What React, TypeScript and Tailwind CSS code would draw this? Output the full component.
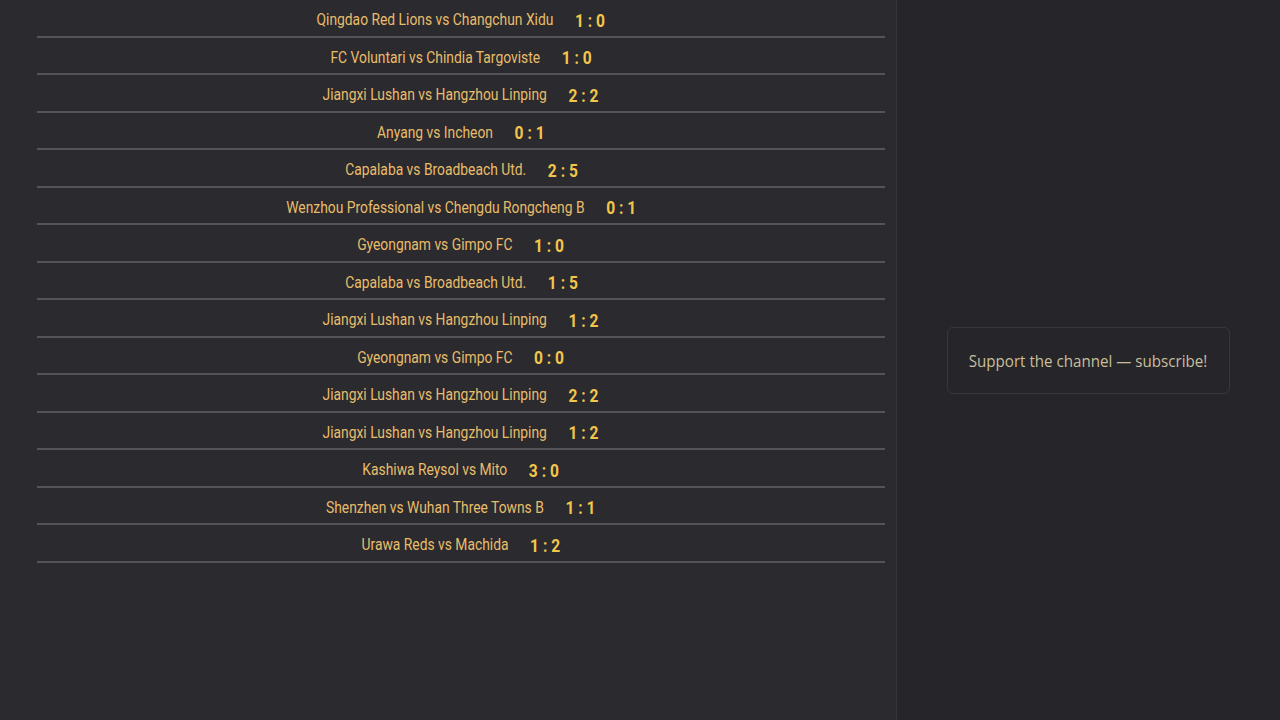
import React from "react";

const matches: [string, string][] = [
  ["Qingdao Red Lions vs Changchun Xidu", "1 : 0"],
  ["FC Voluntari vs Chindia Targoviste", "1 : 0"],
  ["Jiangxi Lushan vs Hangzhou Linping", "2 : 2"],
  ["Anyang vs Incheon", "0 : 1"],
  ["Capalaba vs Broadbeach Utd.", "2 : 5"],
  ["Wenzhou Professional vs Chengdu Rongcheng B", "0 : 1"],
  ["Gyeongnam vs Gimpo FC", "1 : 0"],
  ["Capalaba vs Broadbeach Utd.", "1 : 5"],
  ["Jiangxi Lushan vs Hangzhou Linping", "1 : 2"],
  ["Gyeongnam vs Gimpo FC", "0 : 0"],
  ["Jiangxi Lushan vs Hangzhou Linping", "2 : 2"],
  ["Jiangxi Lushan vs Hangzhou Linping", "1 : 2"],
  ["Kashiwa Reysol vs Mito", "3 : 0"],
  ["Shenzhen vs Wuhan Three Towns B", "1 : 1"],
  ["Urawa Reds vs Machida", "1 : 2"],
];

export default function App() {
  return (
    <div className="flex h-[720px] w-[1280px] overflow-hidden bg-[#26252a] font-['Roboto',sans-serif]">
      <div className="w-[897px] shrink-0 border-r border-[#36353a] bg-[#2b2a2f] pl-[37px] pr-[11px]">
        {matches.map(([t, s], i) => (
          <div key={i} className="flex h-[37.5px] items-center justify-center border-b-2 border-[#545358] pt-[5px]">
            <div className="flex scale-x-[0.865] items-center gap-[25px]">
              <span className="text-[16px] text-[#e8bd6a]">{t}</span>
              <span className="text-[18px] font-bold text-[#f2c64a]">{s}</span>
            </div>
          </div>
        ))}
      </div>
      <div className="flex flex-1 items-center justify-center">
        <div className="flex h-[67px] w-[283px] items-center justify-center rounded-md border border-[#38373d] pt-[2px]">
          <span className="inline-block scale-x-[0.89] whitespace-nowrap font-['Open_Sans',sans-serif] text-[17px] text-[#c9bf9c]">
            Support the channel — subscribe!
          </span>
        </div>
      </div>
    </div>
  );
}
